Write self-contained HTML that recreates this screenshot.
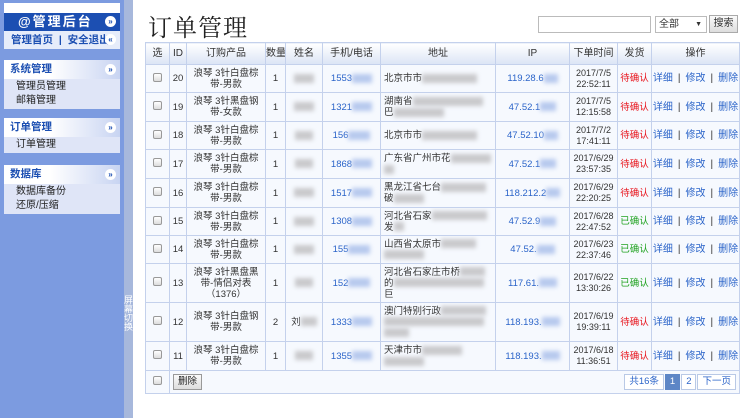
<!DOCTYPE html>
<html><head><meta charset="utf-8"><style>
*{margin:0;padding:0;box-sizing:border-box}
body{width:750px;height:418px;overflow:hidden;background:#fff;font-family:"Liberation Sans","Noto Sans CJK SC",sans-serif;font-size:10px;color:#333;position:relative}
#side{position:absolute;left:0;top:0;width:124px;height:418px;background:#7c9be0}
#strip{position:absolute;left:124px;top:0;width:9px;height:418px;background:#a7b8dc}
#strip span{position:absolute;left:0;top:296px;width:9px;font-size:9px;line-height:9px;color:#fff;text-align:center}
.a{position:absolute;left:4px;width:116px}
.tb{top:3px;height:10px;background:#fff}
.hd{top:13px;height:18px;background:#1c4fb2;color:#fff;font-weight:bold;font-size:13px;line-height:18px;padding-left:14px;letter-spacing:2px}
.lk{top:31px;height:18px;background:#e6ecfa;color:#1c4fb2;font-weight:bold;font-size:10.5px;line-height:18px;padding-left:7px}
.ic{position:absolute;right:4px;width:11px;height:11px;border-radius:50%;background:#fff;color:#1c4fb2;font-size:8px;line-height:11px;text-align:center;font-weight:bold;letter-spacing:0}
.sh{height:19px;background:linear-gradient(90deg,#fff 40%,#c8d4f2);color:#1c4fb2;font-weight:bold;font-size:10.5px;line-height:19px;padding-left:6px;position:relative}
.si{background:#dfe5f7;font-size:10px;line-height:14px;padding:1px 0 1px 12px;color:#222}
h1{position:absolute;left:148px;top:8px;font-size:24px;font-weight:normal;color:#222;font-family:"Liberation Serif","Noto Serif CJK SC",serif;letter-spacing:1px}
#q{position:absolute;left:538px;top:16px;width:113px;height:17px;border:1px solid #bbb}
#sel{position:absolute;left:655px;top:16px;width:52px;height:17px;border:1px solid #bbb;font-size:10px;line-height:15px;padding-left:3px}
#sel b{position:absolute;right:4px;top:0;font-size:7px}
#btn{position:absolute;left:709px;top:15px;width:29px;height:18px;border:1px solid #aaa;background:linear-gradient(#fafafa,#ddd);font-size:10px;line-height:16px;text-align:center}
table{position:absolute;left:145px;top:42px;border-collapse:collapse;table-layout:fixed;width:594px}
td,th{border:1px solid #c4d1ec;text-align:center;font-size:9.5px;line-height:11px;background:#f6f9fe;overflow:hidden;white-space:nowrap;padding:0}
th{background:linear-gradient(#fff,#dbe4f5);font-weight:normal;height:22px;font-size:10px}
.cb{display:inline-block;width:9px;height:9px;border:1px solid #999;border-radius:2px;background:linear-gradient(#fff,#ddd)}
.bl{color:#2b64c9}
.dt{font-size:9px}
.r{color:#e8141c}.g{color:#22a322}
.op{color:#2b64c9;font-size:10px}.op i{color:#333;font-style:normal;margin:0 5px}
.bz{display:inline-block;height:9px;background:#c9c9cc;filter:blur(2px);vertical-align:middle}
.bb{display:inline-block;height:9px;background:#b7c9ee;filter:blur(2px);vertical-align:middle}
.ad{text-align:left;padding-left:3px}
.pg{display:inline-block;border:1px solid #b9c9e6;height:16px;line-height:14px;padding:0 4px;color:#2b64c9;background:#fff;margin-left:1px}
</style></head><body>
<div id="side">
<div class="a tb"></div>
<div class="a hd">@管理后台<span class="ic" style="top:3px">»</span></div>
<div class="a lk">管理首页 &nbsp;|&nbsp; 安全退出<span class="ic" style="top:3px">«</span></div>
<div class="a" style="top:60px"><div class="sh">系统管理<span class="ic" style="top:4px">»</span></div><div class="si">管理员管理<br>邮箱管理</div></div>
<div class="a" style="top:118px"><div class="sh">订单管理<span class="ic" style="top:4px">»</span></div><div class="si">订单管理</div></div>
<div class="a" style="top:165px"><div class="sh">数据库<span class="ic" style="top:4px">»</span></div><div class="si">数据库备份<br>还原/压缩</div></div>
</div>
<div id="strip"><span>屏幕切换</span></div>
<h1>订单管理</h1>
<div id="q"></div><div id="sel">全部<b>▼</b></div><div id="btn">搜索</div>
<table>
<colgroup><col style="width:24px"><col style="width:17px"><col style="width:79px"><col style="width:20px"><col style="width:37px"><col style="width:58px"><col style="width:115px"><col style="width:74px"><col style="width:48px"><col style="width:34px"><col style="width:88px"></colgroup>
<tr><th>选</th><th>ID</th><th>订购产品</th><th>数量</th><th>姓名</th><th>手机/电话</th><th>地址</th><th>IP</th><th>下单时间</th><th>发货</th><th>操作</th></tr>
<tr style="height:28px"><td><span class="cb"></span></td><td>20</td><td>浪琴 3针白盘棕<br>带-男款</td><td>1</td><td><span class="bz" style="width:20px"></span></td><td class="bl">1553<span class="bb" style="width:20px"></span></td><td class="ad">北京市市<span class="bz" style="width:55px"></span></td><td class="bl">119.28.6<span class="bb" style="width:14px"></span></td><td class="dt">2017/7/5<br>22:52:11</td><td class="r">待确认</td><td class="op">详细<i>|</i>修改<i>|</i>删除</td></tr>
<tr style="height:29px"><td><span class="cb"></span></td><td>19</td><td>浪琴 3针黑盘钢<br>带-女款</td><td>1</td><td><span class="bz" style="width:20px"></span></td><td class="bl">1321<span class="bb" style="width:20px"></span></td><td class="ad">湖南省<span class="bz" style="width:70px"></span><br>巴<span class="bz" style="width:50px"></span></td><td class="bl">47.52.1<span class="bb" style="width:16px"></span></td><td class="dt">2017/7/5<br>12:15:58</td><td class="r">待确认</td><td class="op">详细<i>|</i>修改<i>|</i>删除</td></tr>
<tr style="height:28px"><td><span class="cb"></span></td><td>18</td><td>浪琴 3针白盘棕<br>带-男款</td><td>1</td><td><span class="bz" style="width:18px"></span></td><td class="bl">156<span class="bb" style="width:22px"></span></td><td class="ad">北京市市<span class="bz" style="width:55px"></span></td><td class="bl">47.52.10<span class="bb" style="width:14px"></span></td><td class="dt">2017/7/2<br>17:41:11</td><td class="r">待确认</td><td class="op">详细<i>|</i>修改<i>|</i>删除</td></tr>
<tr style="height:29px"><td><span class="cb"></span></td><td>17</td><td>浪琴 3针白盘棕<br>带-男款</td><td>1</td><td><span class="bz" style="width:18px"></span></td><td class="bl">1868<span class="bb" style="width:20px"></span></td><td class="ad">广东省广州市花<span class="bz" style="width:40px"></span><br><span class="bz" style="width:10px"></span></td><td class="bl">47.52.1<span class="bb" style="width:16px"></span></td><td class="dt">2017/6/29<br>23:57:35</td><td class="r">待确认</td><td class="op">详细<i>|</i>修改<i>|</i>删除</td></tr>
<tr style="height:29px"><td><span class="cb"></span></td><td>16</td><td>浪琴 3针白盘棕<br>带-男款</td><td>1</td><td><span class="bz" style="width:20px"></span></td><td class="bl">1517<span class="bb" style="width:20px"></span></td><td class="ad">黑龙江省七台<span class="bz" style="width:45px"></span><br>破<span class="bz" style="width:30px"></span></td><td class="bl">118.212.2<span class="bb" style="width:14px"></span></td><td class="dt">2017/6/29<br>22:20:25</td><td class="r">待确认</td><td class="op">详细<i>|</i>修改<i>|</i>删除</td></tr>
<tr style="height:28px"><td><span class="cb"></span></td><td>15</td><td>浪琴 3针白盘棕<br>带-男款</td><td>1</td><td><span class="bz" style="width:20px"></span></td><td class="bl">1308<span class="bb" style="width:20px"></span></td><td class="ad">河北省石家<span class="bz" style="width:55px"></span><br>发<span class="bz" style="width:10px"></span></td><td class="bl">47.52.9<span class="bb" style="width:16px"></span></td><td class="dt">2017/6/28<br>22:47:52</td><td class="g">已确认</td><td class="op">详细<i>|</i>修改<i>|</i>删除</td></tr>
<tr style="height:28px"><td><span class="cb"></span></td><td>14</td><td>浪琴 3针白盘棕<br>带-男款</td><td>1</td><td><span class="bz" style="width:20px"></span></td><td class="bl">155<span class="bb" style="width:22px"></span></td><td class="ad">山西省太原市<span class="bz" style="width:35px"></span><br><span class="bz" style="width:40px"></span></td><td class="bl">47.52.<span class="bb" style="width:18px"></span></td><td class="dt">2017/6/23<br>22:37:46</td><td class="g">已确认</td><td class="op">详细<i>|</i>修改<i>|</i>删除</td></tr>
<tr style="height:39px"><td><span class="cb"></span></td><td>13</td><td>浪琴 3针黑盘黑<br>带-情侣对表<br>（1376）</td><td>1</td><td><span class="bz" style="width:18px"></span></td><td class="bl">152<span class="bb" style="width:22px"></span></td><td class="ad">河北省石家庄市桥<span class="bz" style="width:25px"></span><br>的<span class="bz" style="width:90px"></span><br>巨</td><td class="bl">117.61.<span class="bb" style="width:18px"></span></td><td class="dt">2017/6/22<br>13:30:26</td><td class="g">已确认</td><td class="op">详细<i>|</i>修改<i>|</i>删除</td></tr>
<tr style="height:39px"><td><span class="cb"></span></td><td>12</td><td>浪琴 3针白盘钢<br>带-男款</td><td>2</td><td>刘<span class="bz" style="width:16px"></span></td><td class="bl">1333<span class="bb" style="width:20px"></span></td><td class="ad">澳门特别行政<span class="bz" style="width:45px"></span><br><span class="bz" style="width:100px"></span><br><span class="bz" style="width:25px"></span></td><td class="bl">118.193.<span class="bb" style="width:18px"></span></td><td class="dt">2017/6/19<br>19:39:11</td><td class="r">待确认</td><td class="op">详细<i>|</i>修改<i>|</i>删除</td></tr>
<tr style="height:29px"><td><span class="cb"></span></td><td>11</td><td>浪琴 3针白盘棕<br>带-男款</td><td>1</td><td><span class="bz" style="width:18px"></span></td><td class="bl">1355<span class="bb" style="width:20px"></span></td><td class="ad">天津市市<span class="bz" style="width:40px"></span><br><span class="bz" style="width:40px"></span></td><td class="bl">118.193.<span class="bb" style="width:18px"></span></td><td class="dt">2017/6/18<br>11:36:51</td><td class="r">待确认</td><td class="op">详细<i>|</i>修改<i>|</i>删除</td></tr>
<tr style="height:23px"><td><span class="cb"></span></td><td colspan="10" style="text-align:left;padding:0 3px;position:relative"><span style="display:inline-block;border:1px solid #999;background:linear-gradient(#fafafa,#ddd);height:16px;line-height:14px;padding:0 4px;color:#222">删除</span><span style="position:absolute;right:3px;top:3px"><span class="pg">共16条</span><span class="pg" style="background:#5d86c6;color:#fff;border-color:#5d86c6">1</span><span class="pg">2</span><span class="pg">下一页</span></span></td></tr>
</table>
</body></html>
